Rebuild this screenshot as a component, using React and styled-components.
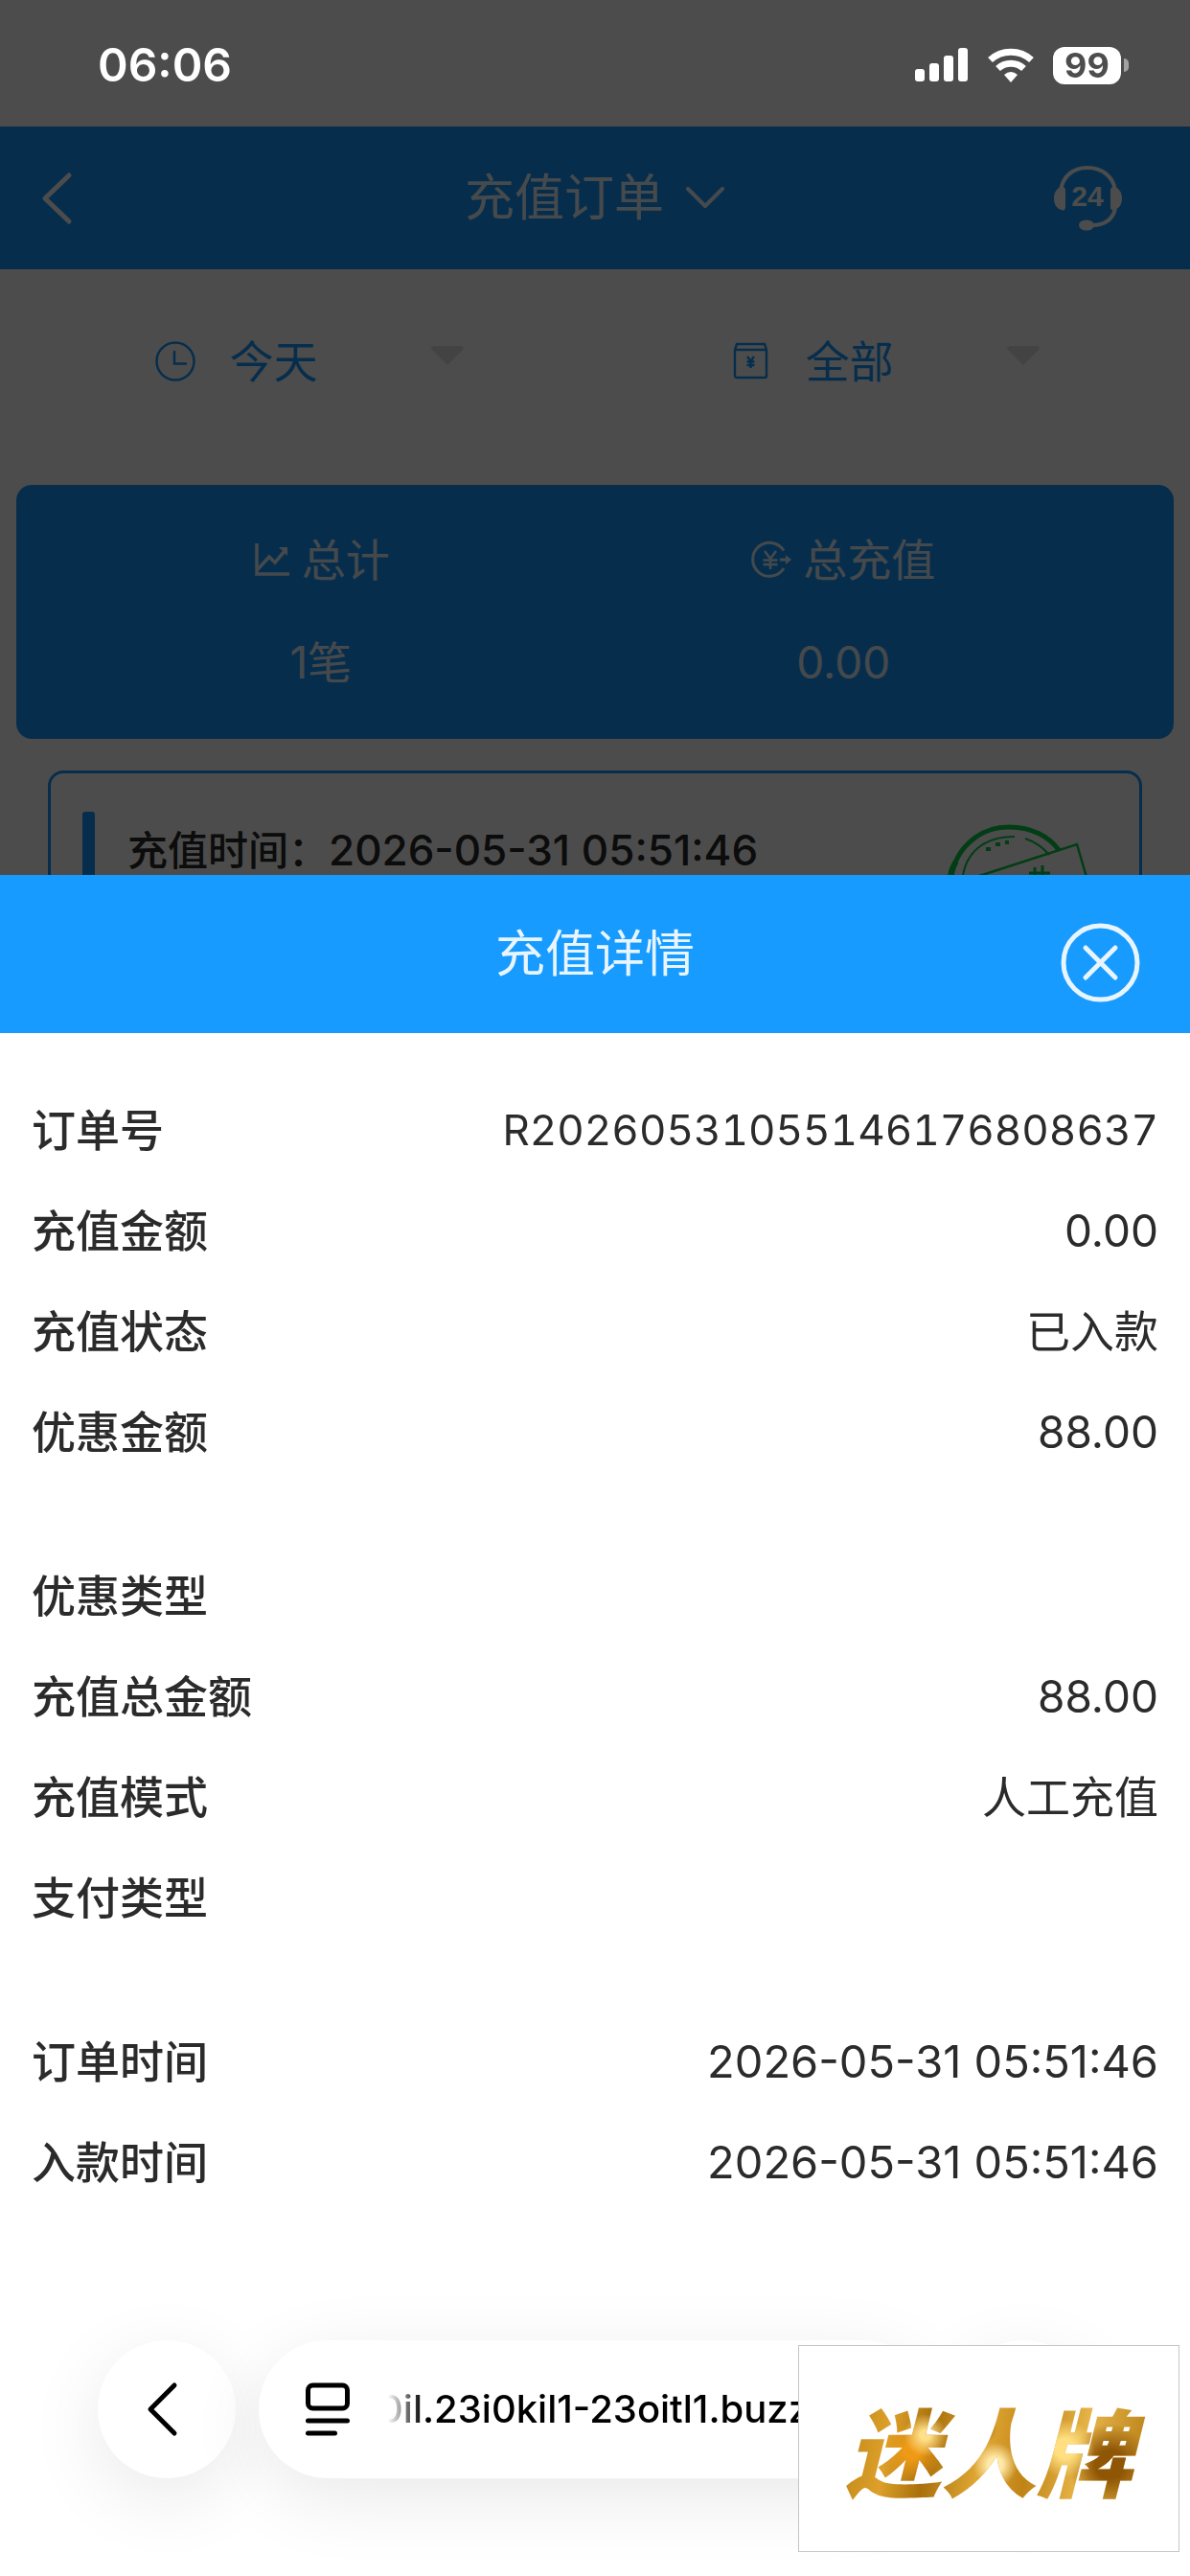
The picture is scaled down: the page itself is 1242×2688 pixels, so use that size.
import React from 'react';
import styled, { createGlobalStyle } from 'styled-components';

// ==============================
// ===========  STYLES  =========
// ==============================

const GlobalStyle = createGlobalStyle`
  * {
    box-sizing: border-box;
  }

  body {
    margin: 0;
    background: #fff;
    color: #2b2b2b;
    font-family: Inter, 'Noto Sans CJK SC', sans-serif;
  }

  button,
  select {
    margin: 0;
    padding: 0;
    border: 0;
    background: none;
    color: inherit;
    font: inherit;
    cursor: pointer;
  }

  svg {
    display: block;
    flex: none;
  }

  h1,
  h2,
  dl,
  dd,
  p {
    margin: 0;
    font-weight: 400;
  }
`;

const Page = styled.main`
  min-height: 100vh;
  padding-top: 132px;
`;

const NavBar = styled.header`
  display: grid;
  grid-template-columns: 1fr auto 1fr;
  align-items: center;
  height: 149px;
  background: #179bff;
  color: #fff;
`;

const NavTitle = styled.button`
  display: flex;
  align-items: center;
  gap: 22px;
  font-size: 52px;
  line-height: 72px;
  opacity: 0.92;
`;

const NavIcon = styled.button`
  justify-self: ${props => (props.$end ? 'end' : 'start')};
  margin: ${props => (props.$end ? '0 70px 0 0' : '0 0 0 41px')};
`;

const Filters = styled.div`
  display: grid;
  grid-template-columns: 1fr 1fr;
  height: 225px;
  padding: 0 18px 34px 22px;
`;

const Filter = styled.label`
  display: flex;
  align-items: center;
  justify-content: center;
  color: #179bff;

  select {
    width: 210px;
    margin-left: 36px;
    appearance: none;
    font-size: 46px;
    line-height: 64px;
  }
`;

const Summary = styled.section`
  display: grid;
  grid-template-columns: 1fr 1fr;
  margin: 0 17px;
  padding: 46px 72px 48px 45px;
  border-radius: 16px;
  background: #179bff;
  color: #fff;
  font-size: 46px;
  line-height: 64px;
  text-align: center;
`;

const StatLabel = styled.div`
  display: flex;
  align-items: center;
  justify-content: center;
  gap: 12px;
  margin-bottom: 43px;
  opacity: 0.9;
`;

const StatValue = styled.div`
  opacity: 0.9;
`;

const OrderCard = styled.article`
  display: flex;
  align-items: flex-start;
  height: 300px;
  margin: 33px 50px 0;
  padding: 40px 50px 0 33px;
  border: 3px solid #179bff;
  border-radius: 16px;
`;

const Marker = styled.span`
  width: 13px;
  height: 120px;
  border-radius: 3px;
  background: #179bff;
`;

const OrderTime = styled.p`
  flex: 1;
  margin: 10px 0 0 34px;
  font-size: 42px;
  font-weight: 500;
  line-height: 60px;

  time {
    font-size: 44px;
  }
`;

const StampSlot = styled.div`
  padding-top: 12px;
`;

const Overlay = styled.div`
  position: fixed;
  inset: 0;
  background: rgba(0, 0, 0, 0.7);
`;

const StatusBar = styled.div`
  position: fixed;
  top: 0;
  left: 0;
  right: 0;
  display: flex;
  align-items: center;
  height: 132px;
  padding: 4px 64px 0 102px;
  color: #fff;
`;

const Clock = styled.time`
  flex: 1;
  font-size: 48px;
  font-weight: 600;
  line-height: 56px;
`;

const StatusIcons = styled.div`
  display: flex;
  align-items: center;
  gap: 20px;
`;

const Battery = styled.div`
  display: flex;
  align-items: center;
  gap: 3px;

  span {
    width: 71px;
    height: 39px;
    border-radius: 12px;
    background: #fff;
    color: #4d4d4d;
    font-size: 36px;
    font-weight: 700;
    line-height: 39px;
    text-align: center;
  }

  &::after {
    content: '';
    width: 5px;
    height: 14px;
    border-radius: 0 7px 7px 0;
    background: #a2a2a2;
  }
`;

const Sheet = styled.section`
  position: fixed;
  left: 0;
  right: 0;
  bottom: 0;
  background: #fff;
`;

const SheetHeader = styled.header`
  display: grid;
  grid-template-columns: 1fr auto 1fr;
  align-items: center;
  height: 165px;
  padding: 0 52px;
  background: #179bff;
  color: #e8f5ff;

  h2 {
    grid-column: 2;
    font-size: 52px;
    line-height: 72px;
  }
`;

const CloseButton = styled.button`
  align-self: end;
  justify-self: end;
  margin-bottom: 32px;
`;

const Details = styled.div`
  display: flex;
  flex-direction: column;
  gap: 66px;
  padding: 48px 33px 0;
`;

const Row = styled.div`
  display: flex;
  align-items: center;
  justify-content: space-between;
  height: 105px;
  font-size: 46px;
  line-height: 64px;

  dt {
    font-weight: 500;
  }
`;

const OrderNumber = styled.span`
  font-size: 44px;
  font-variant-numeric: tabular-nums;
`;

const DateTime = styled.time`
  font-size: 47px;
`;

const BrowserBar = styled.nav`
  display: flex;
  gap: 24px;
  padding: 134px 102px 102px;
  color: #000;
`;

const RoundButton = styled.button`
  display: flex;
  align-items: center;
  justify-content: center;
  width: 144px;
  height: 144px;
  border-radius: 72px;
  background: #fff;
  box-shadow: 0 20px 80px rgba(0, 0, 0, 0.09);
`;

const AddressBar = styled.button`
  display: flex;
  flex: 1;
  align-items: center;
  gap: 40px;
  min-width: 0;
  height: 144px;
  padding: 0 49px;
  border-radius: 72px;
  background: #fff;
  box-shadow: 0 20px 80px rgba(0, 0, 0, 0.09);
`;

const Address = styled.span`
  flex: 1;
  overflow: hidden;
  font-size: 40px;
  font-weight: 500;
  line-height: 52px;
  text-align: left;
  text-indent: -10px;
  white-space: nowrap;
  mask-image: linear-gradient(90deg, transparent, #000 36px);
`;

const Watermark = styled.div`
  position: fixed;
  right: 11px;
  bottom: 25px;
  display: flex;
  align-items: center;
  justify-content: center;
  width: 398px;
  height: 216px;
  border: 1px solid #c6c6c6;
  background: #fff;

  span {
    padding: 0 16px;
    font-family: 'Noto Sans CJK SC', sans-serif;
    font-size: 100px;
    font-style: italic;
    font-weight: 900;
    line-height: 140px;
    color: transparent;
    background: radial-gradient(circle at 30% 40%, #ffe08a 0 2%, transparent 9%),
      radial-gradient(circle at 26% 52%, #ee9a16 0 3%, transparent 12%),
      radial-gradient(circle at 52% 62%, #ffe9a8 0 4%, transparent 12%),
      radial-gradient(circle at 48% 35%, #a86a08 0 2%, transparent 8%),
      radial-gradient(circle at 74% 50%, #ffdf80 0 4%, transparent 12%),
      radial-gradient(circle at 88% 62%, #8f5606 0 5%, transparent 14%),
      linear-gradient(100deg, #b47c10, #dda02a 20%, #a9700c 32%, #e0a735 48%, #c08316 62%, #e6b448 78%, #b37a12);
    background-clip: text;
  }
`;

// ==============================
// ===========  ICONS  ==========
// ==============================

const Chevron = ({ width, height, points, stroke = 5 }) => (
  <svg
    width={width}
    height={height}
    fill="none"
    stroke="currentColor"
    strokeWidth={stroke}
    strokeLinecap="round"
    strokeLinejoin="round"
  >
    <polyline points={points} />
  </svg>
);

const HeadsetIcon = () => (
  <svg width="73" height="70" viewBox="0 0 73 70" fill="currentColor">
    <path
      d="M8 27C10 12 21 3 36 3s27 9 29 24M65 46c-3 11-11 17-24 17"
      fill="none"
      stroke="currentColor"
      strokeWidth="4"
    />
    <path d="M13 27v17c0 3-2 4-4 3-5-1-8-6-8-12s3-11 8-12c3 0 4 1 4 4zM60 27v17c0 3 2 4 4 3 5-1 8-6 8-12s-3-11-8-12c-3 0-4 1-4 4z" />
    <ellipse cx="35" cy="63" rx="8" ry="5.5" />
    <text
      x="36"
      y="43"
      fontFamily="Liberation Sans"
      fontSize="30"
      fontWeight="700"
      textAnchor="middle"
    >
      24
    </text>
  </svg>
);

const ClockIcon = () => (
  <svg width="42" height="42" fill="none" stroke="currentColor" strokeWidth="2.5">
    <circle cx="21" cy="21" r="19.5" />
    <path d="M20 11v12.500h12" strokeLinecap="round" />
  </svg>
);

const YenBoxIcon = () => (
  <svg width="42" height="42" fill="none" stroke="currentColor" strokeWidth="2.400">
    <path d="M4 9l2-6h29l2 6v27q0 2-2 2H6q-2 0-2-2zM4 9h33" />
    <path d="M17 16l3.500 5 3.500-5M20.500 21v7M16.500 21.500h8M16.500 25h8" />
  </svg>
);

const ChartIcon = () => (
  <svg width="40" height="40" fill="none" stroke="currentColor" strokeWidth="3.500">
    <path d="M5 3v32h34" />
    <path d="M6 30l12-13 6 6L35 10" />
    <path d="M28 7h9v9z" fill="currentColor" stroke="none" />
  </svg>
);

const YenCircleIcon = () => (
  <svg width="42" height="42" fill="none" stroke="currentColor" strokeWidth="3">
    <path d="M34 11.500A17.500 17.500 0 1 0 34 30" />
    <path d="M14 12l6 8 6-8M20 20v11M12.500 21.500h15M12.500 26h15" strokeWidth="2.500" />
    <path d="M30 21h9" />
    <path d="M36 16l6 5-6 5z" fill="currentColor" stroke="none" />
  </svg>
);

const Caret = () => (
  <svg width="34" height="32" viewBox="0 0 34 32">
    <path d="M4 0h26q6 1 3 4L17 20 1 4Q-2 1 4 0z" fill="#e0e0e0" />
  </svg>
);

const SignalIcon = () => (
  <svg width="56" height="36" fill="currentColor">
    <rect y="22" width="10" height="13" rx="3" />
    <rect x="15" y="16" width="10" height="19" rx="3" />
    <rect x="30" y="8" width="10" height="27" rx="3" />
    <rect x="45" width="10" height="35" rx="3" />
  </svg>
);

const WifiIcon = () => (
  <svg width="48" height="37" fill="none" stroke="currentColor">
    <path d="M2.500 12.500a32 32 0 0 1 43 0" strokeWidth="7" />
    <path d="M10.500 21.500a20 20 0 0 1 27 0" strokeWidth="7" />
    <path d="M17 28q7-6 14 0l-7 8z" fill="currentColor" stroke="none" />
  </svg>
);

const Stamp = () => (
  <svg width="150" height="150" fill="none" stroke="#07cc46">
    <path d="M3 66C4 28 32 4 64 4c24 0 42 10 52 24" strokeWidth="5" />
    <path d="M3 62q-1-12 6-22" strokeWidth="6" />
    <path d="M16 54C20 32 36 14 70 14M81 16q15 5 25 17" strokeWidth="2" />
    <path d="M30 56l105-34 14 48-110 36z" strokeWidth="2.500" />
    <path d="M40 27h5M50 22h5M60 20h4" strokeWidth="4" />
    <path d="M85 52h22M91 46v14M99 44v16M88 60l18-4" strokeWidth="3" />
  </svg>
);

const CloseIcon = () => (
  <svg
    width="83"
    height="83"
    fill="none"
    stroke="currentColor"
    strokeWidth="5"
    strokeLinecap="round"
  >
    <circle cx="41.500" cy="41.500" r="38.500" />
    <path d="M26 26l31 31M57 26L26 57" />
  </svg>
);

const ReaderIcon = () => (
  <svg
    width="46"
    height="56"
    fill="none"
    stroke="currentColor"
    strokeWidth="5"
    strokeLinecap="round"
  >
    <rect x="2.500" y="3" width="41" height="24" rx="5" />
    <path d="M2.500 40h41M2.500 53h28" />
  </svg>
);

// =================================
// ===========  COMPONENT  =========
// =================================

const groups = [
  [
    ['订单号', <OrderNumber>R20260531055146176808637</OrderNumber>],
    ['充值金额', '0.00'],
    ['充值状态', '已入款'],
    ['优惠金额', '88.00'],
  ],
  [
    ['优惠类型', ''],
    ['充值总金额', '88.00'],
    ['充值模式', '人工充值'],
    ['支付类型', ''],
  ],
  [
    ['订单时间', <DateTime>2026-05-31 05:51:46</DateTime>],
    ['入款时间', <DateTime>2026-05-31 05:51:46</DateTime>],
  ],
];

function App() {
  return (
    <>
      <GlobalStyle />
      <Page>
        <NavBar>
          <NavIcon aria-label="返回">
            <Chevron width="36" height="56" points="31,4 6,28 31,52" />
          </NavIcon>
          <NavTitle>
            充值订单
            <Chevron width="42" height="26" points="3,3 21,21 39,3" stroke={4} />
          </NavTitle>
          <NavIcon $end aria-label="客服">
            <HeadsetIcon />
          </NavIcon>
        </NavBar>
        <Filters>
          <Filter>
            <ClockIcon />
            <select aria-label="时间">
              <option>今天</option>
            </select>
            <Caret />
          </Filter>
          <Filter>
            <YenBoxIcon />
            <select aria-label="类型">
              <option>全部</option>
            </select>
            <Caret />
          </Filter>
        </Filters>
        <Summary>
          <div>
            <StatLabel>
              <ChartIcon />
              总计
            </StatLabel>
            <StatValue>1笔</StatValue>
          </div>
          <div>
            <StatLabel>
              <YenCircleIcon />
              总充值
            </StatLabel>
            <StatValue>0.00</StatValue>
          </div>
        </Summary>
        <OrderCard>
          <Marker />
          <OrderTime>
            充值时间：<time>2026-05-31 05:51:46</time>
          </OrderTime>
          <StampSlot>
            <Stamp />
          </StampSlot>
        </OrderCard>
      </Page>

      <Overlay />

      <StatusBar>
        <Clock>06:06</Clock>
        <StatusIcons>
          <SignalIcon />
          <WifiIcon />
          <Battery>
            <span>99</span>
          </Battery>
        </StatusIcons>
      </StatusBar>

      <Sheet role="dialog" aria-label="充值详情">
        <SheetHeader>
          <h2>充值详情</h2>
          <CloseButton aria-label="关闭">
            <CloseIcon />
          </CloseButton>
        </SheetHeader>
        <Details>
          {groups.map(rows => (
            <dl key={rows[0][0]}>
              {rows.map(([label, value]) => (
                <Row key={label}>
                  <dt>{label}</dt>
                  <dd>{value}</dd>
                </Row>
              ))}
            </dl>
          ))}
        </Details>
        <BrowserBar>
          <RoundButton aria-label="后退">
            <Chevron width="44" height="58" points="30,4 5,29 30,54" />
          </RoundButton>
          <AddressBar>
            <ReaderIcon />
            <Address>0il.23i0kil1-23oitl1.buzz</Address>
          </AddressBar>
          <RoundButton aria-label="更多" />
        </BrowserBar>
      </Sheet>

      <Watermark>
        <span>迷人牌</span>
      </Watermark>
    </>
  );
}

export default App;
